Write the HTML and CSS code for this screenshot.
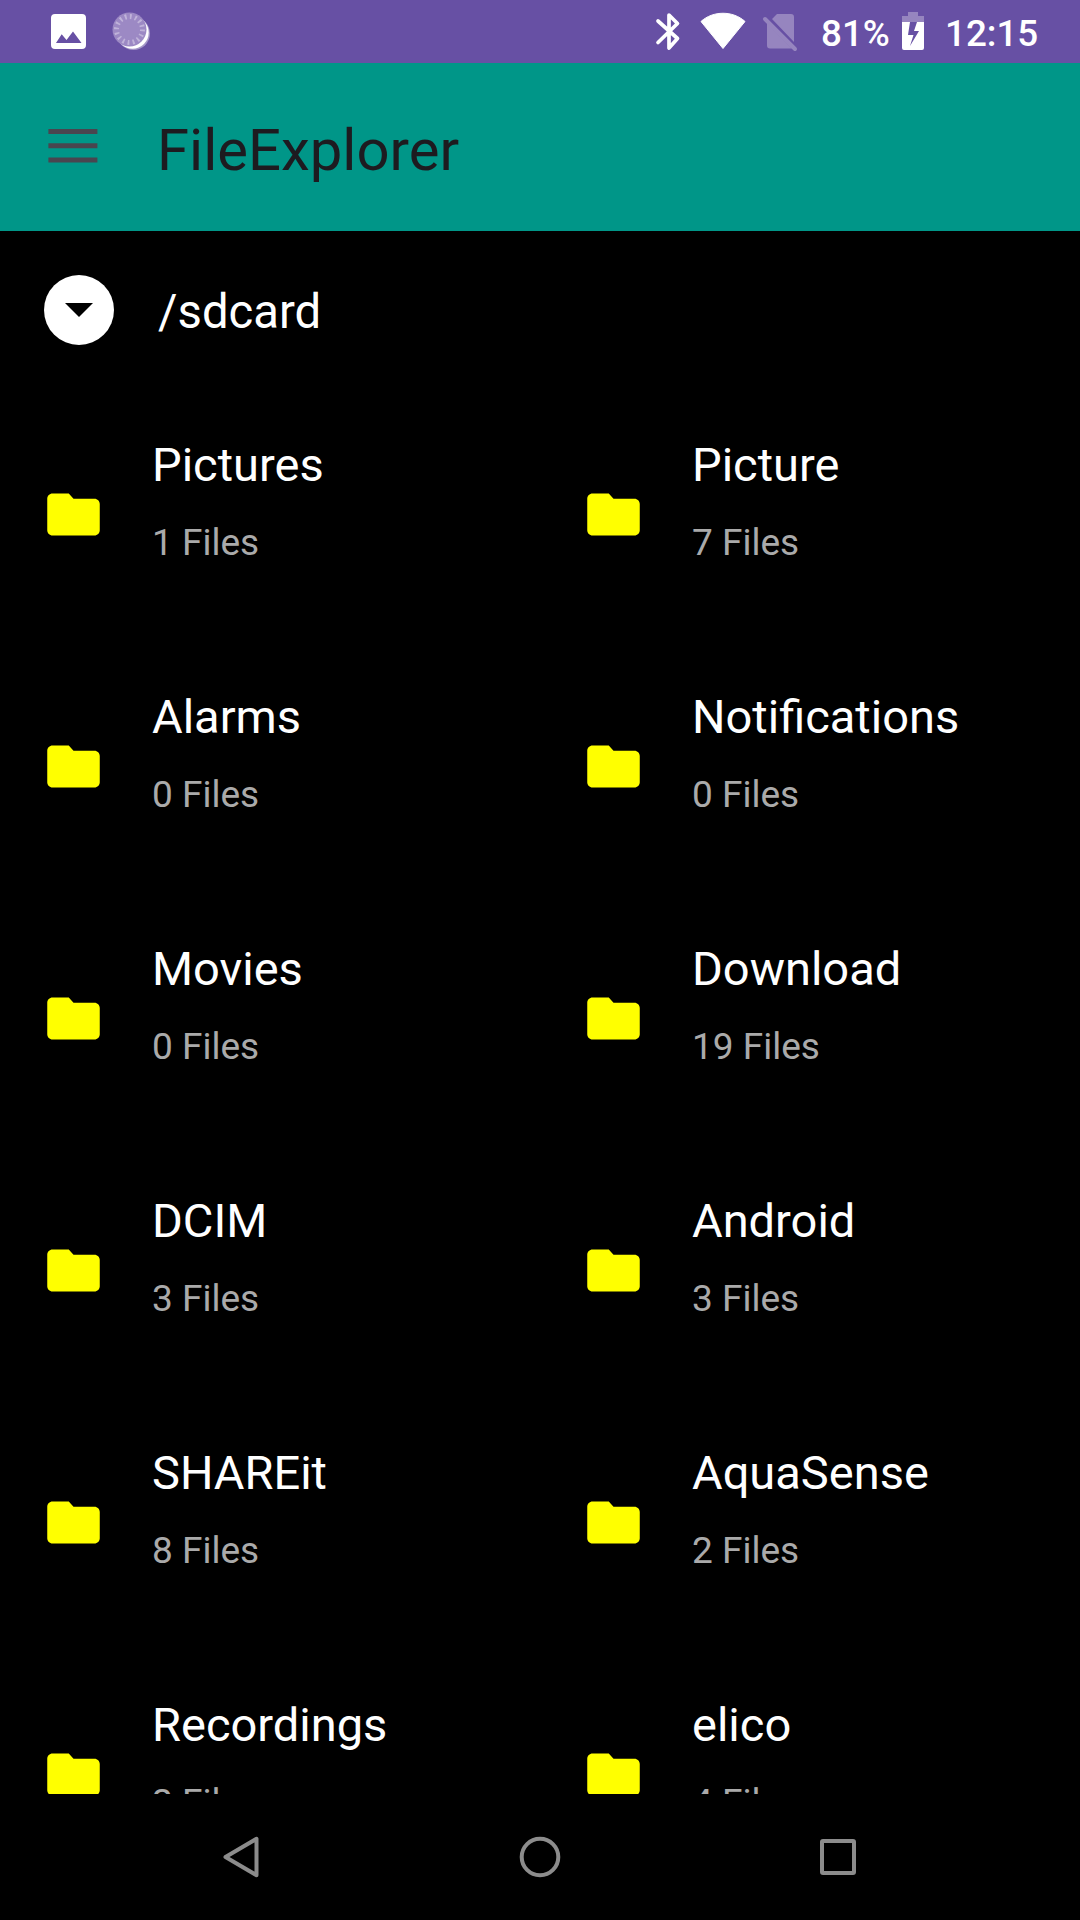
FILE: index.html
```html
<!DOCTYPE html>
<html lang="en">
<head>
<meta charset="utf-8">
<title>FileExplorer</title>
<link rel="stylesheet" href="styles.css">
</head>
<body>
<svg class="defs" aria-hidden="true">
  <symbol id="folder" viewBox="0 0 24 24"><path d="M10.2 4H4c-1.1 0-2 .9-2 2v12c0 1.1.9 2 2 2h16c1.1 0 2-.9 2-2V8c0-1.1-.9-2-2-2h-8z"/></symbol>
</svg>
<header class="status">
  <svg class="status-left" width="150" height="63" viewBox="30 0 150 63">
    <path fill="#fff" fill-rule="evenodd" d="M55 14h27q4 0 4 4v27q0 4-4 4H55q-4 0-4-4V18q0-4 4-4zM56 43h25.500l-8.500-11.500-6.500 8.500-4.800-5.700z"/>
    <circle cx="133.500" cy="33.500" r="16.500" fill="#fff" opacity=".4"/>
    <circle cx="132.500" cy="32.500" r="16.200" fill="#fff"/>
    <circle cx="129.500" cy="29.500" r="17" fill="#9c89c4"/>
    <circle cx="129.500" cy="29.500" r="13" fill="none" stroke="#c0b3da" stroke-width="5" stroke-dasharray="1.800 3.305"/>
  </svg>
  <div class="status-right">
    <svg width="152" height="63" viewBox="652 0 152 63">
      <path d="M658 21l19.500 17.500L669 48V15l8.500 8.500L658 42.500" fill="none" stroke="#fff" stroke-width="3.700" stroke-linecap="round" stroke-linejoin="round"/>
      <path d="M701 21.500C713 10.500 733 10.500 745 21.500L723 48.500Z" fill="#fff" stroke="#fff" stroke-width="1"/>
      <path d="M777 14h14q3 0 3 3v25L772 19zM767 23l25 25.500H770q-3 0-3-3z" fill="#9685bf"/>
      <path d="M765 19l30 30" stroke="#9685bf" stroke-width="4" stroke-linecap="round"/>
    </svg>
    <span class="battery-level">81%</span>
    <svg class="battery" width="24" height="63" viewBox="901 0 24 63">
      <path d="M908 12h10v4h6v6h-22v-6h6z" fill="#9685bf"/>
      <path fill="#fff" fill-rule="evenodd" d="M902 22h22v26q0 2-2 2h-18q-2 0-2-2zM910 22l-2 13h5.500L910 46l9-15h-5l3-9z"/>
    </svg>
    <span class="clock">12:15</span>
  </div>
</header>
<div class="appbar">
  <svg class="menu" width="50" height="36" viewBox="0 0 50 36"><path d="M.400 1h49v5H.400zM.400 15.200h49v5H.400zM.400 29.400h49v5H.400z"/></svg>
  <h1 class="title">FileExplorer</h1>
</div>
<main class="content">
  <div class="path">
    <svg width="70" height="70" viewBox="0 0 70 70"><circle cx="35" cy="35" r="35" fill="#fff"/><path d="M21 28h28L35 42z"/></svg>
    <span class="path-text">/sdcard</span>
  </div>
  <ul class="grid">
    <li class="item"><svg class="folder"><use href="#folder"/></svg><div class="info"><span class="name">Pictures</span><span class="count">1 Files</span></div></li>
    <li class="item"><svg class="folder"><use href="#folder"/></svg><div class="info"><span class="name">Picture</span><span class="count">7 Files</span></div></li>
    <li class="item"><svg class="folder"><use href="#folder"/></svg><div class="info"><span class="name">Alarms</span><span class="count">0 Files</span></div></li>
    <li class="item"><svg class="folder"><use href="#folder"/></svg><div class="info"><span class="name">Notifications</span><span class="count">0 Files</span></div></li>
    <li class="item"><svg class="folder"><use href="#folder"/></svg><div class="info"><span class="name">Movies</span><span class="count">0 Files</span></div></li>
    <li class="item"><svg class="folder"><use href="#folder"/></svg><div class="info"><span class="name">Download</span><span class="count">19 Files</span></div></li>
    <li class="item"><svg class="folder"><use href="#folder"/></svg><div class="info"><span class="name">DCIM</span><span class="count">3 Files</span></div></li>
    <li class="item"><svg class="folder"><use href="#folder"/></svg><div class="info"><span class="name">Android</span><span class="count">3 Files</span></div></li>
    <li class="item"><svg class="folder"><use href="#folder"/></svg><div class="info"><span class="name">SHAREit</span><span class="count">8 Files</span></div></li>
    <li class="item"><svg class="folder"><use href="#folder"/></svg><div class="info"><span class="name">AquaSense</span><span class="count">2 Files</span></div></li>
    <li class="item"><svg class="folder"><use href="#folder"/></svg><div class="info"><span class="name">Recordings</span><span class="count">2 Files</span></div></li>
    <li class="item"><svg class="folder"><use href="#folder"/></svg><div class="info"><span class="name">elico</span><span class="count">4 Files</span></div></li>
  </ul>
</main>
<nav class="nav">
  <svg width="48" height="48" viewBox="0 0 48 48"><path d="M38.500 5.800v36.400L7.500 24z"/></svg>
  <svg width="48" height="48" viewBox="0 0 48 48"><circle cx="24" cy="24" r="18.300"/></svg>
  <svg width="48" height="48" viewBox="0 0 48 48"><rect x="8" y="8" width="32" height="32" rx="1"/></svg>
</nav>
</body>
</html>
```
FILE: styles.css
```css
* { box-sizing: border-box; margin: 0; padding: 0; }
body {
  width: 1080px;
  height: 1920px;
  display: flex;
  flex-direction: column;
  overflow: hidden;
  background: #000;
  color: #fff;
  font-family: Roboto, sans-serif;
}
svg { display: block; flex: none; }
.defs { display: none; }

.status {
  flex: none;
  height: 63px;
  display: flex;
  justify-content: space-between;
  padding: 0 42px 0 30px;
  background: #6750a4;
}
.status-right {
  display: flex;
  font-size: 36.75px;
  font-weight: 500;
  line-height: 68px;
}
.battery-level { width: 97px; padding-left: 17px; white-space: nowrap; }
.clock { width: 113px; padding-left: 20px; white-space: nowrap; }

.appbar {
  flex: none;
  height: 168px;
  display: flex;
  align-items: center;
  padding: 0 48px 6px;
  background: #009688;
}
.menu { fill: #49454f; margin-top: 4px; }
.title {
  margin-left: 59px;
  padding-top: 11px;
  font-size: 58px;
  font-weight: 400;
  line-height: 76px;
  color: #1d1b20;
}

.content { flex: 1; min-height: 0; overflow: hidden; }
.path {
  height: 157.5px;
  display: flex;
  align-items: center;
  gap: 44px;
  padding-left: 44px;
}
.path-text { font-size: 47.25px; line-height: 56px; padding-top: 5px; }

.grid {
  display: grid;
  grid-template-columns: 540px 540px;
  grid-auto-rows: 252px;
  list-style: none;
}
.item {
  display: flex;
  align-items: center;
  gap: 47px;
  padding-left: 42px;
}
.folder { width: 63px; height: 63px; fill: #ff0; }
.info { display: flex; flex-direction: column; gap: 28px; margin-top: -27px; }
.name { font-size: 47px; line-height: 56px; }
.count { font-size: 37px; line-height: 44px; color: #aaa; }

.nav {
  flex: none;
  height: 126px;
  display: flex;
  justify-content: space-between;
  align-items: center;
  padding: 0 218px;
}
.nav svg { fill: none; stroke: #8c8c8c; stroke-width: 4; stroke-linejoin: round; }
```
